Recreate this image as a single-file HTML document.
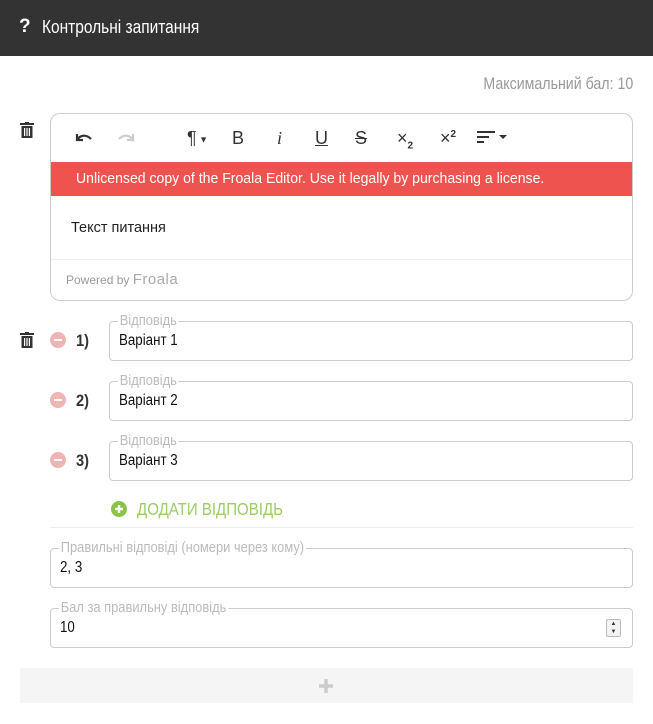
<!DOCTYPE html>
<html><head><meta charset="utf-8"><style>
*{box-sizing:border-box;margin:0;padding:0}
body{width:653px;height:724px;background:#fff;font-family:"Liberation Sans",sans-serif;position:relative;overflow:hidden}
.a{position:absolute}
.c{display:inline-block;transform:scaleX(.86);transform-origin:left center;white-space:nowrap}
.hdr{left:0;top:0;width:653px;height:56px;background:#333;color:#fff;font-size:18px}
.fld{position:absolute;border:1px solid #ccc;border-radius:4px;height:40px}
.fld .lb{position:absolute;left:8px;top:-10px;background:#fff;padding:0 2px;color:#bbb;font-size:15px;line-height:17px}
.fld .v{position:absolute;left:9px;top:10px;font-size:15.5px;color:#111}
.minus{width:16px;height:16px;border-radius:50%;background:#efb5b5}
.minus:after{content:"";position:absolute;left:4px;top:7px;width:8px;height:2px;background:#fff}
.num{font-size:17px;font-weight:bold;color:#333}
.tb{font-size:18px;color:#333;top:128px}
</style></head><body>
<div class="a hdr"><span class="a" style="left:19px;top:16px;font-weight:bold;font-size:19px">?</span><span class="a c" style="left:42px;top:17px">Контрольні запитання</span></div>
<div class="a" style="right:20px;top:75px;font-size:16.5px;color:#999;width:200px;text-align:right"><span class="c" style="transform-origin:right center">Максимальний бал: 10</span></div>

<svg class="a" style="left:20px;top:122px" width="14" height="16" viewBox="0 0 14 16"><rect x="0" y="1" width="14" height="2" fill="#333"/><rect x="5" y="0" width="4" height="2" fill="#333"/><rect x="1.5" y="4" width="11" height="12" fill="#333"/><rect x="4" y="6" width="1.2" height="8" fill="#fff"/><rect x="6.4" y="6" width="1.2" height="8" fill="#fff"/><rect x="8.8" y="6" width="1.2" height="8" fill="#fff"/></svg>
<svg class="a" style="left:20px;top:332px" width="14" height="16" viewBox="0 0 14 16"><rect x="0" y="1" width="14" height="2" fill="#333"/><rect x="5" y="0" width="4" height="2" fill="#333"/><rect x="1.5" y="4" width="11" height="12" fill="#333"/><rect x="4" y="6" width="1.2" height="8" fill="#fff"/><rect x="6.4" y="6" width="1.2" height="8" fill="#fff"/><rect x="8.8" y="6" width="1.2" height="8" fill="#fff"/></svg>

<div class="a" style="left:50px;top:113px;width:583px;height:188px;border:1px solid #ccc;border-radius:10px;overflow:hidden">
 <div class="a" style="left:0;top:48px;width:100%;height:34px;background:#ef5350;color:#fff;font-size:14.5px;line-height:34px;padding-left:25px"><span style="display:inline-block;transform:scaleX(.97);transform-origin:left center">Unlicensed copy of the Froala Editor. Use it legally by purchasing a license.</span></div>
 <div class="a" style="left:20px;top:106px;font-size:14.5px;color:#222">Текст питання</div>
 <div class="a" style="left:0;top:145px;width:100%;border-top:1px solid #eee"></div>
 <div class="a" style="left:15px;top:157px;font-size:12px;color:#999">Powered by <span style="font-size:15px;color:#aaa;letter-spacing:.5px">Froala</span></div>
</div>
<svg class="a" style="left:74px;top:131px" width="20" height="14" viewBox="0 0 20 14"><path d="M3 3v6h6M3 9c3-5 9-6 14-1" fill="none" stroke="#333" stroke-width="2.2"/></svg>
<svg class="a" style="left:116px;top:131px" width="20" height="14" viewBox="0 0 20 14"><path d="M17 3v6h-6M17 9c-3-5-9-6-14-1" fill="none" stroke="#ccc" stroke-width="2.2"/></svg>
<span class="a tb" style="left:187px">¶<span style="font-size:9px;vertical-align:middle"> ▼</span></span>
<span class="a tb" style="left:232px">B</span>
<span class="a tb" style="left:277px;font-style:italic;font-family:'Liberation Serif',serif">i</span>
<span class="a tb" style="left:315px;text-decoration:underline">U</span>
<span class="a tb" style="left:355px;text-decoration:line-through">S</span>
<span class="a tb" style="left:397px">×<sub style="font-size:10px;font-weight:bold">2</sub></span>
<span class="a tb" style="left:440px">×<sup style="font-size:10px;font-weight:bold">2</sup></span>
<svg class="a" style="left:477px;top:130px" width="32" height="14" viewBox="0 0 32 14"><path d="M0 2h18M0 7h12M0 12h7" stroke="#333" stroke-width="2"/><path d="M22 5h8l-4 4z" fill="#333"/></svg>

<div class="a minus" style="left:50px;top:332px"></div><span class="a num c" style="left:76px;top:331px">1)</span>
<div class="fld" style="left:109px;top:321px;width:524px"><span class="lb c">Відповідь</span><span class="v c">Варіант 1</span></div>
<div class="a minus" style="left:50px;top:392px"></div><span class="a num c" style="left:76px;top:391px">2)</span>
<div class="fld" style="left:109px;top:381px;width:524px"><span class="lb c">Відповідь</span><span class="v c">Варіант 2</span></div>
<div class="a minus" style="left:50px;top:452px"></div><span class="a num c" style="left:76px;top:451px">3)</span>
<div class="fld" style="left:109px;top:441px;width:524px"><span class="lb c">Відповідь</span><span class="v c">Варіант 3</span></div>

<svg class="a" style="left:111px;top:501px" width="16" height="16" viewBox="0 0 16 16"><circle cx="8" cy="8" r="8" fill="#8bc34a"/><path d="M8 4v8M4 8h8" stroke="#fff" stroke-width="2.4"/></svg>
<span class="a c" style="left:137px;top:499px;font-size:17.5px;color:#9ccc65">ДОДАТИ ВІДПОВІДЬ</span>
<div class="a" style="left:50px;top:527px;width:583px;border-top:1px solid #eee"></div>

<div class="fld" style="left:50px;top:548px;width:583px"><span class="lb c">Правильні відповіді (номери через кому)</span><span class="v c">2, 3</span></div>
<div class="fld" style="left:50px;top:608px;width:583px"><span class="lb c">Бал за правильну відповідь</span><span class="v c">10</span>
<div class="a" style="right:11px;top:10px;width:15px;height:18px;border:1px solid #bbb;border-radius:2px;background:#f3f3f3;font-size:6px;line-height:8px;text-align:center;color:#333">▲<br>▼</div></div>

<div class="a" style="left:20px;top:668px;width:613px;height:35px;background:#f5f5f5"></div>
<svg class="a" style="left:319px;top:679px" width="14" height="14" viewBox="0 0 14 14"><path d="M7 0v14M0 7h14" stroke="#ccc" stroke-width="3.5"/></svg>
</body></html>
